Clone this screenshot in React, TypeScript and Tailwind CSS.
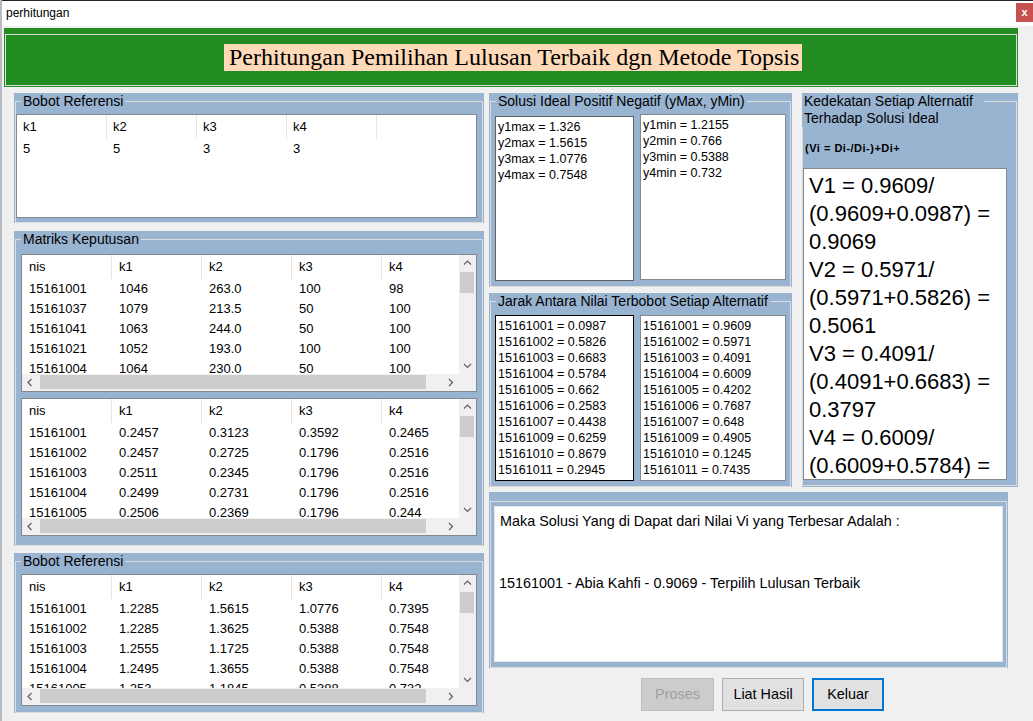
import React from "react";

type Dir = "up" | "down" | "left" | "right";

const Chev = ({ d }: { d: Dir }) => {
  const pts: Record<Dir, string> = {
    up: "1,5.5 4.5,2 8,5.5",
    down: "1,3 4.5,6.5 8,3",
    left: "5.5,1 2,4.5 5.5,8",
    right: "3,1 6.5,4.5 3,8",
  };
  return (
    <svg width="9" height="9" viewBox="0 0 9 9">
      <polyline points={pts[d]} fill="none" stroke="#606060" strokeWidth="1.2" />
    </svg>
  );
};

const VScroll = () => (
  <div className="w-[17px] shrink-0 bg-[#f0f0f0] flex flex-col">
    <div className="h-[17px] shrink-0 flex items-center justify-center">
      <Chev d="up" />
    </div>
    <div className="flex-1 min-h-0">
      <div className="ml-[1px] w-[14px] h-[21px] bg-[#cdcdcd]" />
    </div>
    <div className="h-[17px] shrink-0 flex items-center justify-center">
      <Chev d="down" />
    </div>
  </div>
);

const HScroll = () => (
  <div className="h-[17px] shrink-0 flex bg-[#f0f0f0]">
    <div className="w-[17px] shrink-0 flex items-center justify-center">
      <Chev d="left" />
    </div>
    <div className="flex-1 min-w-0">
      <div className="ml-[1px] mt-[1px] w-[386px] h-[14px] bg-[#cdcdcd]" />
    </div>
    <div className="w-[17px] shrink-0 flex items-center justify-center">
      <Chev d="right" />
    </div>
    <div className="w-[17px] shrink-0 bg-[#f0f0f0]" />
  </div>
);

function ListView({
  cols,
  rows,
  className,
  scroll,
  pad,
}: {
  cols: string[];
  rows: string[][];
  className: string;
  scroll: boolean;
  pad: string;
}) {
  return (
    <div className={`bg-white border border-[#828790] flex flex-col overflow-hidden text-[13px] ${className}`}>
      <div className="flex flex-1 min-h-0">
        <div className="flex-1 min-w-0 overflow-hidden">
          <div className="flex h-[24px]">
            {cols.map((c, i) => (
              <div key={i} className={`w-[90px] shrink-0 border-r border-[#e5e5e5] flex items-center ${pad}`}>
                {c}
              </div>
            ))}
          </div>
          {rows.map((r, i) => (
            <div key={i} className="flex h-[20px]">
              {r.map((c, j) => (
                <div key={j} className={`w-[90px] shrink-0 flex items-center whitespace-nowrap ${pad}`}>
                  {c}
                </div>
              ))}
            </div>
          ))}
        </div>
        {scroll && <VScroll />}
      </div>
      {scroll && <HScroll />}
    </div>
  );
}

function Group({
  title,
  className,
  children,
}: {
  title: string;
  className: string;
  children: React.ReactNode;
}) {
  return (
    <div className={`bg-[#99b4d1] px-[1px] flex flex-col shrink-0 ${className}`}>
      <fieldset className="flex-1 min-h-0 min-w-0 border border-[#dcdcdc]">
        <legend className="ml-[5px] px-[2px] text-[14px] leading-[17px] whitespace-nowrap">{title}</legend>
        {children}
      </fieldset>
    </div>
  );
}

function ListBox({ lines, className }: { lines: string[]; className: string }) {
  return (
    <div className={`bg-white overflow-hidden pl-[2px] pt-[2px] text-[12.5px] leading-[16px] shrink-0 ${className}`}>
      {lines.map((l) => (
        <div key={l} className="whitespace-nowrap">
          {l}
        </div>
      ))}
    </div>
  );
}

const matriks1 = [
  ["15161001", "1046", "263.0", "100", "98"],
  ["15161037", "1079", "213.5", "50", "100"],
  ["15161041", "1063", "244.0", "50", "100"],
  ["15161021", "1052", "193.0", "100", "100"],
  ["15161004", "1064", "230.0", "50", "100"],
  ["15161005", "1053", "201.0", "50", "100"],
];

const matriks2 = [
  ["15161001", "0.2457", "0.3123", "0.3592", "0.2465"],
  ["15161002", "0.2457", "0.2725", "0.1796", "0.2516"],
  ["15161003", "0.2511", "0.2345", "0.1796", "0.2516"],
  ["15161004", "0.2499", "0.2731", "0.1796", "0.2516"],
  ["15161005", "0.2506", "0.2369", "0.1796", "0.244"],
  ["15161006", "0.2491", "0.2411", "0.1796", "0.2516"],
];

const bobot = [
  ["15161001", "1.2285", "1.5615", "1.0776", "0.7395"],
  ["15161002", "1.2285", "1.3625", "0.5388", "0.7548"],
  ["15161003", "1.2555", "1.1725", "0.5388", "0.7548"],
  ["15161004", "1.2495", "1.3655", "0.5388", "0.7548"],
  ["15161005", "1.253", "1.1845", "0.5388", "0.732"],
  ["15161006", "1.2455", "1.2055", "0.5388", "0.7548"],
];

const cols5 = ["nis", "k1", "k2", "k3", "k4"];

const jarakPlus = [
  "15161001 = 0.0987",
  "15161002 = 0.5826",
  "15161003 = 0.6683",
  "15161004 = 0.5784",
  "15161005 = 0.662",
  "15161006 = 0.2583",
  "15161007 = 0.4438",
  "15161009 = 0.6259",
  "15161010 = 0.8679",
  "15161011 = 0.2945",
];

const jarakMin = [
  "15161001 = 0.9609",
  "15161002 = 0.5971",
  "15161003 = 0.4091",
  "15161004 = 0.6009",
  "15161005 = 0.4202",
  "15161006 = 0.7687",
  "15161007 = 0.648",
  "15161009 = 0.4905",
  "15161010 = 0.1245",
  "15161011 = 0.7435",
];

const vLines = [
  "V1 = 0.9609/",
  "(0.9609+0.0987) =",
  "0.9069",
  "V2 = 0.5971/",
  "(0.5971+0.5826) =",
  "0.5061",
  "V3 = 0.4091/",
  "(0.4091+0.6683) =",
  "0.3797",
  "V4 = 0.6009/",
  "(0.6009+0.5784) =",
  "0.5095",
  "V5 = 0.4202/",
];

export default function App() {
  return (
    <div className="w-[1033px] h-[721px] overflow-hidden bg-[#f0f0f0] flex font-['Liberation_Sans',Arial,sans-serif] text-black">
      <div className="w-[2px] shrink-0 bg-[#b8bcc2]" />
      <div className="flex-1 min-w-0 flex flex-col">
        {/* title bar */}
        <div className="h-[26px] shrink-0 bg-white border-t border-[#262626] flex items-start">
          <span className="ml-[4px] mt-[5px] text-[12px] leading-[14px]">perhitungan</span>
          <div className="ml-auto mt-[2px] w-[17px] h-[19px] bg-[#c75050] flex items-center justify-center text-white text-[11px] font-bold leading-none">
            x
          </div>
        </div>

        {/* header */}
        <div className="ml-[2px] mt-[2px] w-[1014px] h-[59px] shrink-0 bg-[#228b22] px-[1px] pt-[6px] pb-[1px] flex">
          <div className="flex-1 border border-[#dcdcdc] flex justify-center items-start pl-[4px]">
            <div className="mt-[9px] w-[578px] h-[27px] bg-[#ffdab9] pl-[5px] font-['Liberation_Serif',serif] text-[24px] leading-[27px] whitespace-nowrap overflow-hidden">
              Perhitungan Pemilihan Lulusan Terbaik dgn Metode Topsis
            </div>
          </div>
        </div>

        {/* body */}
        <div className="flex mt-[6px] ml-[12px]">
          {/* left column */}
          <div className="w-[470px] shrink-0 flex flex-col">
            <Group title="Bobot Referensi" className="h-[130px]">
              <ListView
                cols={["k1", "k2", "k3", "k4"]}
                rows={[["5", "5", "3", "3"]]}
                className="mt-[4px] w-[461px] h-[104px]"
                scroll={false}
                pad="pl-[6px]"
              />
            </Group>
            <Group title="Matriks Keputusan" className="mt-[8px] h-[315px]">
              <ListView cols={cols5} rows={matriks1} className="mt-[6px] ml-[5px] w-[456px] h-[138px]" scroll pad="pl-[7px]" />
              <ListView cols={cols5} rows={matriks2} className="mt-[6px] ml-[5px] w-[456px] h-[138px]" scroll pad="pl-[7px]" />
            </Group>
            <Group title="Bobot Referensi" className="mt-[7px] h-[160px]">
              <ListView cols={cols5} rows={bobot} className="mt-[4px] ml-[5px] w-[456px] h-[132px]" scroll pad="pl-[7px]" />
            </Group>
          </div>

          {/* right column */}
          <div className="ml-[5px] flex flex-col">
            <div className="flex">
              <div className="w-[303px] flex flex-col">
                <Group title="Solusi Ideal Positif Negatif (yMax, yMin)" className="h-[194px]">
                  <div className="flex items-start">
                    <ListBox
                      lines={["y1max = 1.326", "y2max = 1.5615", "y3max = 1.0776", "y4max = 0.7548"]}
                      className="ml-[4px] mt-[6px] w-[139px] h-[165px] border border-[#5f5f5f]"
                    />
                    <ListBox
                      lines={["y1min = 1.2155", "y2min = 0.766", "y3min = 0.5388", "y4min = 0.732"]}
                      className="ml-[6px] mt-[4px] w-[146px] h-[166px] border border-[#828790]"
                    />
                  </div>
                </Group>
                <Group title="Jarak Antara Nilai Terbobot Setiap Alternatif" className="mt-[6px] h-[194px]">
                  <div className="flex items-start">
                    <ListBox lines={jarakPlus} className="ml-[4px] mt-[5px] w-[139px] h-[166px] border border-black" />
                    <ListBox lines={jarakMin} className="ml-[6px] mt-[5px] w-[146px] h-[166px] border border-[#828790]" />
                  </div>
                </Group>
              </div>

              {/* Kedekatan */}
              <div className="ml-[10px] w-[216px] h-[394px] bg-[#99b4d1] flex flex-col">
                <div className="flex shrink-0">
                  <div className="w-[182px] pl-[2px] text-[14px] leading-[17px] whitespace-nowrap">
                    <div>Kedekatan Setiap Alternatif</div>
                    <div>Terhadap Solusi Ideal</div>
                  </div>
                  <div className="flex-1 mt-[8px] mr-[1px] border-t border-r border-[#dcdcdc]" />
                </div>
                <div className="flex-1 min-h-0 mr-[1px] mb-[1px] border-l border-r border-b border-[#dcdcdc] flex flex-col">
                  <div className="mt-[14px] pl-[2px] text-[11px] leading-[14px] font-bold tracking-[0.5px] whitespace-nowrap">
                    (Vi = Di-/Di-)+Di+
                  </div>
                  <div className="mt-[13px] w-[204px] h-[312px] shrink-0 bg-white border border-[#828790] overflow-hidden pl-[5px] pt-[3px] text-[22px] leading-[28px]">
                    {vLines.map((l) => (
                      <div key={l} className="whitespace-nowrap">
                        {l}
                      </div>
                    ))}
                  </div>
                </div>
              </div>
            </div>

            {/* result */}
            <div className="mt-[5px] w-[519px] h-[176px] bg-[#99b4d1] px-[1px] pt-[9px] flex flex-col">
              <div className="flex-1 min-h-0 border border-[#dcdcdc]">
                <div className="ml-[3px] mt-[4px] w-[509px] h-[156px] bg-white border border-[#e2e6eb] text-[14.4px] leading-[17px]">
                  <div className="ml-[5px] mt-[6px] whitespace-nowrap">
                    Maka Solusi Yang di Dapat dari Nilai Vi yang Terbesar Adalah :
                  </div>
                  <div className="ml-[4px] mt-[45px] whitespace-nowrap">
                    15161001 - Abia Kahfi - 0.9069 - Terpilih Lulusan Terbaik
                  </div>
                </div>
              </div>
            </div>

            {/* buttons */}
            <div className="mt-[10px] pl-[152px] flex gap-[8px]">
              <div className="w-[73px] h-[33px] bg-[#cccccc] border border-[#bfbfbf] flex items-center justify-center text-[14.4px] text-[#a0a0a0]">
                Proses
              </div>
              <div className="w-[82px] h-[33px] bg-[#e1e1e1] border border-[#adadad] flex items-center justify-center text-[14.4px]">
                Liat Hasil
              </div>
              <div className="w-[72px] h-[33px] bg-[#e1e1e1] border-2 border-[#0078d7] flex items-center justify-center text-[14.4px]">
                Keluar
              </div>
            </div>
          </div>
        </div>
      </div>
    </div>
  );
}
